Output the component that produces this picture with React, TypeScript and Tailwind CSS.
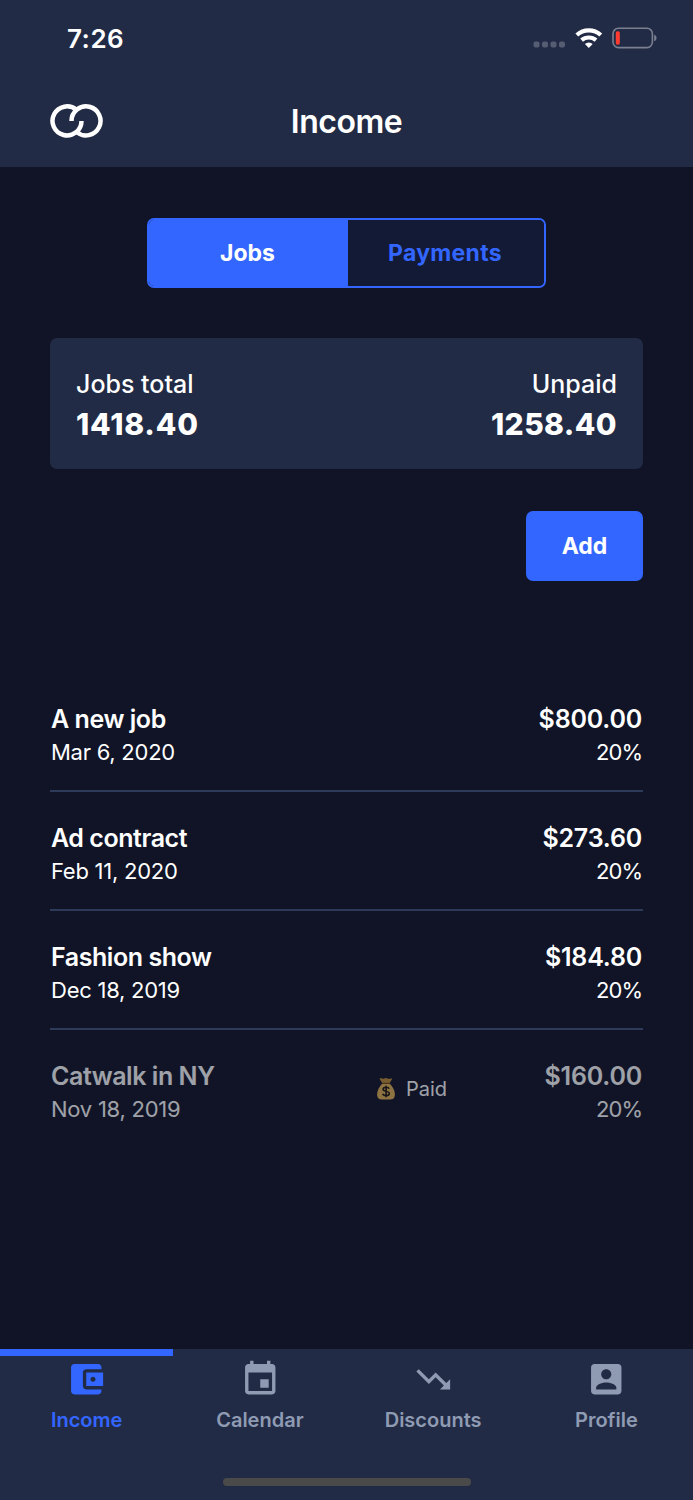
import React from "react";

type Job = { title: string; date: string; amount: string; rate: string; paid?: boolean };

const jobs: Job[] = [
  { title: "A new job", date: "Mar 6, 2020", amount: "$800.00", rate: "20%" },
  { title: "Ad contract", date: "Feb 11, 2020", amount: "$273.60", rate: "20%" },
  { title: "Fashion show", date: "Dec 18, 2019", amount: "$184.80", rate: "20%" },
  { title: "Catwalk in NY", date: "Nov 18, 2019", amount: "$160.00", rate: "20%", paid: true },
];

const tabs = [
  {
    label: "Income",
    path: "M21 18v1c0 1.1-.9 2-2 2H5c-1.11 0-2-.9-2-2V5c0-1.1.89-2 2-2h14c1.1 0 2 .9 2 2v1h-9c-1.11 0-2 .9-2 2v8c0 1.1.89 2 2 2h9zm-9-2h10V8H12v8zm4-2.5c-.83 0-1.5-.67-1.5-1.5s.67-1.5 1.5-1.5 1.5.67 1.5 1.5-.67 1.5-1.5 1.5z",
  },
  {
    label: "Calendar",
    path: "M17 12h-5v5h5v-5zM16 1v2H8V1H6v2H5c-1.11 0-1.99.9-1.99 2L3 19c0 1.1.89 2 2 2h14c1.1 0 2-.9 2-2V5c0-1.1-.9-2-2-2h-1V1h-2zm3 18H5V8h14v11z",
  },
  {
    label: "Discounts",
    path: "M16 18l2.29-2.29-4.88-4.88-4 4L2 7.41 3.41 6l6 6 4-4 6.3 6.29L22 12v6z",
  },
  {
    label: "Profile",
    path: "M3 5v14c0 1.1.89 2 2 2h14c1.1 0 2-.9 2-2V5c0-1.1-.9-2-2-2H5c-1.11 0-2 .9-2 2zm12 4c0 1.66-1.34 3-3 3s-3-1.34-3-3 1.34-3 3-3 3 1.34 3 3zm-9 8c0-2 4-3.1 6-3.1s6 1.1 6 3.1v1H6v-1z",
  },
];

function StatusBar() {
  return (
    <div className="flex h-[76px] items-center justify-between pl-[67px] pr-[36px]">
      <span className="mt-px text-[26px] font-semibold leading-8 tracking-[0.5px]">7:26</span>
      <svg width="124" height="24" viewBox="0 0 124 24" fill="none">
        <g fill="#555d73">
          <rect x="0.500" y="15.500" width="6" height="6" rx="2" />
          <rect x="9" y="15.500" width="6" height="6" rx="2" />
          <rect x="17.500" y="15.500" width="6" height="6" rx="2" />
          <rect x="26" y="15.500" width="6" height="6" rx="2" />
        </g>
        <g stroke="#fff" strokeWidth="4.200">
          <path d="M43.800 9a18 18 0 0 1 24 0" />
          <path d="M48.600 14.200a11 11 0 0 1 14.400 0" />
        </g>
        <path d="M55.800 22l-3.900-3.900a5.500 5.500 0 0 1 7.800 0z" fill="#fff" />
        <rect x="80" y="2.200" width="39.400" height="19.400" rx="5.500" stroke="#7a8091" strokeWidth="1.600" />
        <path d="M121.200 8.700c1.500.6 2.300 1.900 2.300 3.300s-.8 2.700-2.300 3.300z" fill="#7a8091" />
        <rect x="82.800" y="5.300" width="4" height="13.400" rx="1.600" fill="#ff3b30" />
      </svg>
    </div>
  );
}

function Logo() {
  return (
    <svg width="54" height="36" viewBox="0 0 54 36" fill="none" stroke="#fff" strokeWidth="4.500">
      <path d="M26.500 6.950A14.500 14.500 0 1 0 31.500 17.900" />
      <path d="M26.500 28.850A14.500 14.500 0 1 0 21.500 17.900" />
    </svg>
  );
}

function MoneyBag() {
  return (
    <svg width="20" height="24" viewBox="0 0 20 26" preserveAspectRatio="none" aria-hidden="true">
      <path d="M3.500 1.800c2-1 3 .3 4.300 0C9.300.800 10.500.900 12 1.800c1.400.5 2.600-.8 4.300.1L13.400 7H6.600z" fill="#c08f38" />
      <path d="M6.500 7h7c3 3 5.400 7.400 5.400 11.700 0 4-1.700 5.600-4.400 5.600h-9c-2.700 0-4.400-1.600-4.400-5.600C1.100 14.400 3.500 10 6.500 7z" fill="#e0b254" />
      <path d="M6.300 6.900h7.400" stroke="#6b4a1b" strokeWidth="1.500" strokeLinecap="round" />
      <path d="M13.200 12.800c-.5-1.200-1.600-1.700-3.100-1.700-1.700 0-3 .8-3 2.200 0 3.200 6.200 1.300 6.200 4.600 0 1.500-1.300 2.300-3.200 2.300-1.700 0-3-.7-3.400-2M10.100 9.400v12.600" stroke="#1c1610" strokeWidth="1.600" fill="none" />
    </svg>
  );
}

function JobRow({ job, last }: { job: Job; last: boolean }) {
  return (
    <li
      className={
        last
          ? "flex h-[119px] pl-px pr-px pt-[29px] opacity-60"
          : "flex h-[119px] border-b-2 border-[#2e3a59] pl-px pr-px pt-[29px]"
      }
    >
      <div className="w-[325px]">
        <p className="text-[25px] font-semibold leading-[34px] tracking-[-0.45px]">{job.title}</p>
        <p className="text-[22px] leading-[33px] tracking-[-0.25px]">{job.date}</p>
      </div>
      <div className="flex h-[60px] flex-1 items-center gap-[10px]">
        {job.paid && (
          <>
            <MoneyBag />
            <span className="text-[20px]">Paid</span>
          </>
        )}
      </div>
      <div className="text-right">
        <p className="text-[25px] font-semibold leading-[34px] tracking-[-0.2px]">{job.amount}</p>
        <p className="text-[22px] leading-[33px] tracking-[-1px]">{job.rate}</p>
      </div>
    </li>
  );
}

export default function App() {
  return (
    <div className="flex h-[1500px] w-[693px] flex-col overflow-hidden bg-[#101426] font-['Inter',sans-serif] text-white">
      <header className="h-[167px] shrink-0 bg-[#222b45]">
        <StatusBar />
        <div className="grid h-[90px] grid-cols-[1fr_auto_1fr] items-center px-[50px]">
          <Logo />
          <h1 className="mt-[2px] text-[32px] font-semibold leading-10 tracking-[-0.5px]">Income</h1>
        </div>
      </header>

      <main className="flex flex-1 flex-col px-[50px] pt-[51px]">
        <div className="ml-[97px] flex h-[70px] w-[399px] overflow-hidden rounded-[7px] border-2 border-[#3366ff] text-[23px] font-bold">
          <button className="w-[199px] shrink-0 bg-[#3366ff] pr-[2px]">Jobs</button>
          <button className="flex-1 bg-[#121a36] pr-[2px] tracking-[0.3px] text-[#3366ff]">Payments</button>
        </div>

        <section className="mt-[50px] flex h-[131px] justify-between rounded-[7px] bg-[#222b45] px-[26px] pt-[28px]">
          <div>
            <p className="text-[25px] font-medium leading-[36px]">Jobs total</p>
            <p className="text-[30px] font-extrabold leading-[44px] tracking-[0.8px]">1418.40</p>
          </div>
          <div className="text-right">
            <p className="text-[25px] font-medium leading-[36px]">Unpaid</p>
            <p className="text-[30px] font-extrabold leading-[44px] tracking-[0.4px]">1258.40</p>
          </div>
        </section>

        <button className="mt-[42px] h-[70px] w-[117px] self-end rounded-[7px] bg-[#3366ff] text-[23px] font-bold">Add</button>

        <ul className="mt-[92px]">
          {jobs.map((job, i) => (
            <JobRow key={job.title} job={job} last={i === jobs.length - 1} />
          ))}
        </ul>
      </main>

      <footer className="flex h-[151px] shrink-0 flex-col items-center bg-[#222b45]">
        <nav className="grid w-full grid-cols-4">
          {tabs.map((tab, i) => (
            <a
              key={tab.label}
              className={
                i === 0
                  ? "flex h-[90px] flex-col items-center border-t-[7px] border-[#3366ff] pt-[3px] text-[#3366ff]"
                  : "flex h-[90px] flex-col items-center border-t-[7px] border-transparent pt-[3px] text-[#8f9bb3]"
              }
            >
              <svg width="40.500" height="40.500" viewBox="0 0 24 24" fill="currentColor" className="shrink-0">
                <path d={tab.path} />
              </svg>
              <span className="mt-[6px] text-[20px] font-semibold leading-7">{tab.label}</span>
            </a>
          ))}
        </nav>
        <div className="mt-[39px] h-2 w-[248px] rounded-full bg-[#4a4a4a]" />
      </footer>
    </div>
  );
}
